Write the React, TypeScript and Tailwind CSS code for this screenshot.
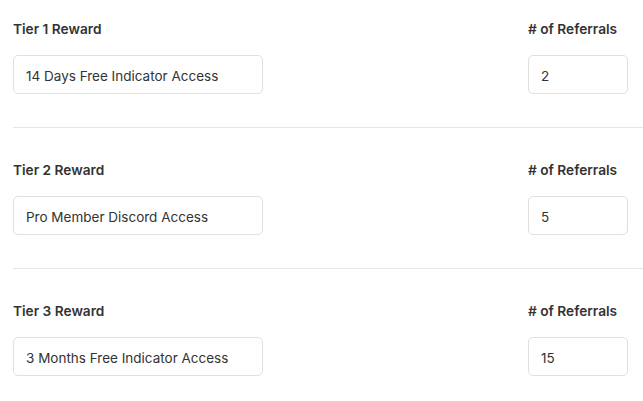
import React from "react";

const tiers = [
  { label: "Tier 1 Reward", reward: "14 Days Free Indicator Access", count: "2" },
  { label: "Tier 2 Reward", reward: "Pro Member Discord Access", count: "5" },
  { label: "Tier 3 Reward", reward: "3 Months Free Indicator Access", count: "15" },
];

export default function App() {
  return (
    <div
      className="w-[643px] h-[401px] bg-white overflow-hidden pl-[13px]"
      style={{ fontFamily: "Inter, 'Noto Sans', sans-serif" }}
    >
      {tiers.map((t, i) => (
        <div
          key={i}
          className={`${i === 0 ? "pt-[20px]" : "pt-[33px]"} pb-[33px] border-b border-[#e6e6e6] pr-[15px] flex justify-between`}
        >
          <div className="flex flex-col">
            <div className="text-[13.7px] leading-[18px] font-semibold text-[#333333] mb-[17px]">
              {t.label}
            </div>
            <div className="w-[250px] h-[39px] border border-[#e0e0e0] rounded-[5px] px-[12px] pt-[3px] flex items-center text-[13.5px] text-[#333333]">
              {t.reward}
            </div>
          </div>
          <div className="flex flex-col w-[100px]">
            <div className="text-[13.7px] leading-[18px] font-semibold text-[#333333] mb-[17px] whitespace-nowrap">
              # of Referrals
            </div>
            <div className="w-[100px] h-[39px] border border-[#e0e0e0] rounded-[5px] px-[12px] pt-[3px] flex items-center text-[13.5px] text-[#333333]">
              {t.count}
            </div>
          </div>
        </div>
      ))}
    </div>
  );
}
